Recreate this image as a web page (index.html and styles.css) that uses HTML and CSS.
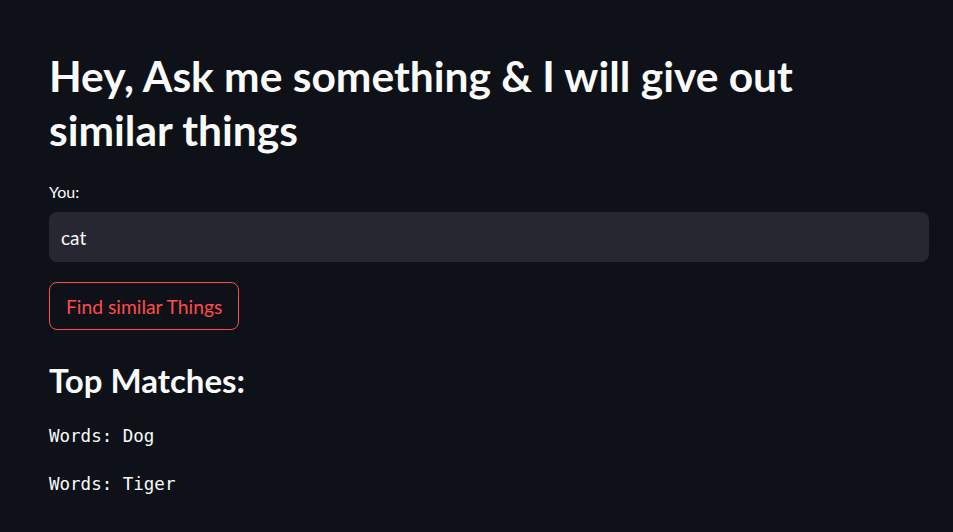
FILE: index.html
```html
<!DOCTYPE html>
<html>
<head>
<meta charset="utf-8">
<link rel="stylesheet" href="styles.css">
</head>
<body>
<main class="app">
  <h1 class="title">Hey, Ask me something &amp; I will give out similar things</h1>
  <label class="field-label" for="q">You:</label>
  <div class="input-box"><input id="q" class="text-input" type="text" value="cat"></div>
  <button class="btn">Find similar Things</button>
  <h3 class="subtitle">Top Matches:</h3>
  <div class="mono-line">Words: Dog</div>
  <div class="mono-line">Words: Tiger</div>
</main>
</body>
</html>
```

FILE: styles.css
```css
html, body {
  margin: 0;
  padding: 0;
  background: #0e1117;
  color: #fafafa;
  font-family: Lato, "Open Sans", sans-serif;
}
.app {
  padding: 49px 24px 0 49px;
  display: flex;
  flex-direction: column;
  align-items: flex-start;
}
.title {
  margin: 0;
  font-size: 42.5px;
  font-weight: 700;
  line-height: 54px;
  max-width: 780px;
}
.field-label {
  margin-top: 25px;
  font-size: 16px;
  line-height: 20px;
}
.input-box {
  margin-top: 10px;
  align-self: stretch;
  height: 50px;
  background: #262730;
  border-radius: 8px;
  display: flex;
  align-items: center;
}
.text-input {
  flex: 1;
  background: transparent;
  border: none;
  outline: none;
  color: #fafafa;
  font-family: Lato, "Open Sans", sans-serif;
  font-size: 19px;
  padding: 0 12px;
}
.btn {
  margin-top: 20px;
  height: 48px;
  padding: 0 16px;
  background: transparent;
  border: 1px solid #ff4b4b;
  border-radius: 8px;
  color: #ff4b4b;
  font-family: Lato, "Open Sans", sans-serif;
  font-size: 19.3px;
}
.subtitle {
  margin: 30px 0 0;
  font-size: 33px;
  font-weight: 700;
  line-height: 40px;
}
.mono-line {
  margin-top: 22px;
  font-family: "DejaVu Sans Mono", monospace;
  font-size: 17.5px;
  line-height: 29px;
}
.mono-line + .mono-line {
  margin-top: 19px;
}
```
